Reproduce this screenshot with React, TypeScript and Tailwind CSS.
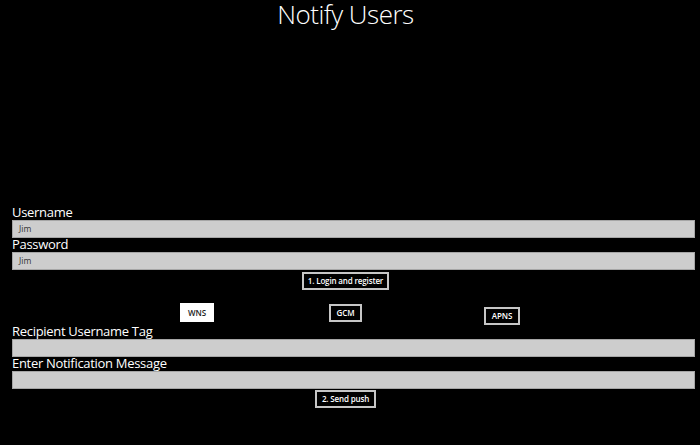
import React from "react";

function Field({ label, value }: { label: string; value?: string }) {
  return (
    <div className="flex flex-col">
      <div className="h-[14px] whitespace-nowrap text-[13px] leading-[13px] tracking-[-0.3px] text-white">{label}</div>
      <div className="flex h-[18px] items-center border border-[#a6a6a6] bg-[#cdcdcd] pl-[6px] text-[8.5px] text-[#333]">
        {value}
      </div>
    </div>
  );
}

function Btn({ children, active, className }: { children: React.ReactNode; active?: boolean; className?: string }) {
  return (
    <div
      className={
        "flex h-[18px] items-center justify-center whitespace-nowrap border-2 text-[8px] font-semibold tracking-[-0.15px] " +
        (active ? "border-white bg-white text-[#222] " : "border-[#c6c6c6] bg-black text-white ") +
        (className ?? "")
      }
    >
      {children}
    </div>
  );
}

export default function App() {
  return (
    <div
      className="flex h-[445px] w-[700px] flex-col bg-black"
      style={{ fontFamily: '"Open Sans", "Noto Sans", sans-serif' }}
    >
      <div className="h-[32px] w-[691px] pt-[1px] text-center text-[26px] font-light leading-[26px] tracking-[-0.5px] text-white">
        Notify Users
      </div>
      <div className="ml-[12px] mr-[5px] mt-[174px] flex flex-col">
        <Field label="Username" value="Jim" />
        <Field label="Password" value="Jim" />
        <Btn className="ml-[290px] mt-[2px] w-[87px]">1. Login and register</Btn>
        <div className="flex h-[35px] items-start">
          <Btn active className="ml-[168px] mt-[13px] h-[19px] w-[34px]">WNS</Btn>
          <Btn className="ml-[115px] mt-[14px] w-[33px]">GCM</Btn>
          <Btn className="ml-[122px] mt-[17px] w-[36px]">APNS</Btn>
        </div>
        <Field label="Recipient Username Tag" />
        <Field label="Enter Notification Message" />
        <Btn className="ml-[303px] mt-[1px] w-[61px]">2. Send push</Btn>
      </div>
    </div>
  );
}
